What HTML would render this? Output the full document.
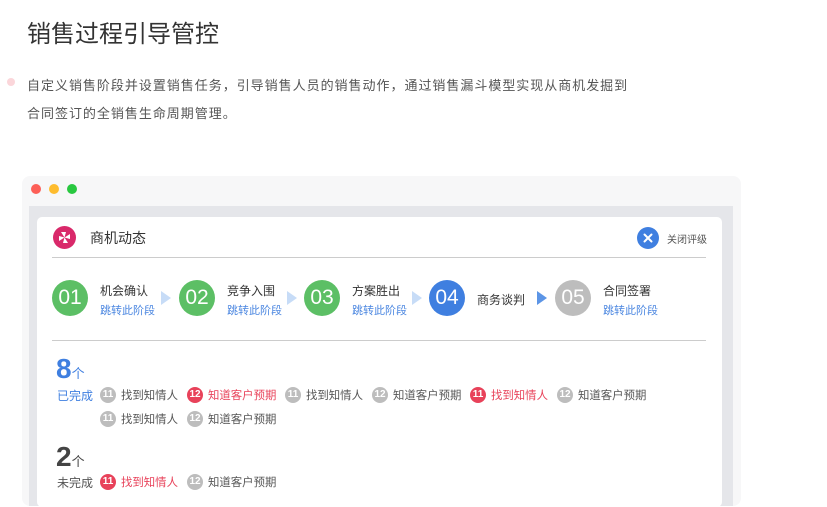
<!DOCTYPE html>
<html><head><meta charset="utf-8"><style>
*{margin:0;padding:0;box-sizing:border-box}
body{width:827px;height:496px;overflow:hidden;background:#fff;font-family:"Liberation Sans","Noto Sans CJK SC",sans-serif;position:relative;color:#333}
.a{position:absolute;white-space:nowrap}
.c{position:absolute;border-radius:50%;color:#fff;text-align:center}
.step{width:36px;height:36px;line-height:36px;font-size:21px;top:280px}
.lab{font-size:12px;color:#333;top:282px}
.lnk{font-size:11px;color:#4a86e0;top:302px}
.arr{position:absolute;top:291px;width:0;height:0;border-top:7px solid transparent;border-bottom:7px solid transparent;border-left:10px solid #c7dcf7}
.tg{width:16px;height:16px;line-height:16px;font-size:10px;font-weight:bold;background:#bdbdbd}
.tt{font-size:11.4px;color:#555}
.red{background:#e8425a}
.rt{color:#e8425a}
</style></head><body>
<div class="a" style="left:27px;top:14px;font-size:24px;color:#333">销售过程引导管控</div>
<div class="c" style="left:7px;top:78px;width:8px;height:8px;background:#fbd6da"></div>
<div class="a" style="left:27px;top:75px;font-size:13px;letter-spacing:0.98px;color:#555">自定义销售阶段并设置销售任务，引导销售人员的销售动作，通过销售漏斗模型实现从商机发掘到</div>
<div class="a" style="left:27px;top:103px;font-size:13px;letter-spacing:0.98px;color:#555">合同签订的全销售生命周期管理。</div>

<div class="a" style="left:22px;top:176px;width:719px;height:330px;background:#f7f7f8;border-radius:8px"></div>
<div class="c" style="left:31px;top:184px;width:10px;height:10px;background:#fd5f57"></div>
<div class="c" style="left:49px;top:184px;width:10px;height:10px;background:#febc2e"></div>
<div class="c" style="left:67px;top:184px;width:10px;height:10px;background:#29c840"></div>
<div class="a" style="left:29px;top:206px;width:704px;height:300px;background:#e5e6ea"></div>
<div class="a" style="left:37px;top:217px;width:685px;height:290px;background:#fff;border-radius:5px"></div>

<div class="c" style="left:53px;top:226px;width:23px;height:23px;background:#d9296a">
<svg width="23" height="23" viewBox="0 0 23 23"><g fill="#fff"><path d="M11.5 11.5 L8 6 L13 6Z"/><path d="M11.5 11.5 L17 8 L17 13Z"/><path d="M11.5 11.5 L15 17 L10 17Z"/><path d="M11.5 11.5 L6 15 L6 10Z"/></g></svg></div>
<div class="a" style="left:90px;top:228px;font-size:14px;color:#333">商机动态</div>
<div class="c" style="left:637px;top:227px;width:22px;height:22px;background:#3f7fe0">
<svg width="22" height="22" viewBox="0 0 22 22"><path d="M7.5 7.5L14.5 14.5M14.5 7.5L7.5 14.5" stroke="#fff" stroke-width="2" stroke-linecap="round"/></svg></div>
<div class="a" style="left:667px;top:231px;font-size:10px;color:#555">关闭评级</div>
<div class="a" style="left:52px;top:257px;width:654px;height:1px;background:#ccc"></div>

<div class="c step" style="left:52px;background:#5cbf65">01</div>
<div class="a lab" style="left:100px">机会确认</div><div class="a lnk" style="left:100px">跳转此阶段</div>
<div class="arr" style="left:161px"></div>
<div class="c step" style="left:179px;background:#5cbf65">02</div>
<div class="a lab" style="left:227px">竞争入围</div><div class="a lnk" style="left:227px">跳转此阶段</div>
<div class="arr" style="left:287px"></div>
<div class="c step" style="left:304px;background:#5cbf65">03</div>
<div class="a lab" style="left:352px">方案胜出</div><div class="a lnk" style="left:352px">跳转此阶段</div>
<div class="arr" style="left:412px"></div>
<div class="c step" style="left:429px;background:#3f7fe0">04</div>
<div class="a lab" style="left:477px;top:291px">商务谈判</div>
<div class="arr" style="left:537px;border-left-color:#5c95e6"></div>
<div class="c step" style="left:555px;background:#bdbdbd">05</div>
<div class="a lab" style="left:603px">合同签署</div><div class="a lnk" style="left:603px">跳转此阶段</div>
<div class="a" style="left:52px;top:340px;width:654px;height:1px;background:#ccc"></div>

<div class="a" style="left:56px;top:353px;font-size:28px;font-weight:bold;color:#3f7fe0">8<span style="font-size:13px;font-weight:normal">个</span></div>
<div class="a" style="left:57px;top:387px;font-size:12px;color:#3f7fe0">已完成</div>
<div class="c tg" style="left:100px;top:387px">11</div><div class="a tt" style="left:121px;top:387px">找到知情人</div>
<div class="c tg red" style="left:187px;top:387px">12</div><div class="a tt rt" style="left:208px;top:387px">知道客户预期</div>
<div class="c tg" style="left:285px;top:387px">11</div><div class="a tt" style="left:306px;top:387px">找到知情人</div>
<div class="c tg" style="left:372px;top:387px">12</div><div class="a tt" style="left:393px;top:387px">知道客户预期</div>
<div class="c tg red" style="left:470px;top:387px">11</div><div class="a tt rt" style="left:491px;top:387px">找到知情人</div>
<div class="c tg" style="left:557px;top:387px">12</div><div class="a tt" style="left:578px;top:387px">知道客户预期</div>
<div class="c tg" style="left:100px;top:411px">11</div><div class="a tt" style="left:121px;top:411px">找到知情人</div>
<div class="c tg" style="left:187px;top:411px">12</div><div class="a tt" style="left:208px;top:411px">知道客户预期</div>

<div class="a" style="left:56px;top:441px;font-size:28px;font-weight:bold;color:#444">2<span style="font-size:13px;font-weight:normal">个</span></div>
<div class="a" style="left:57px;top:474px;font-size:12px;color:#555">未完成</div>
<div class="c tg red" style="left:100px;top:474px">11</div><div class="a tt rt" style="left:121px;top:474px">找到知情人</div>
<div class="c tg" style="left:187px;top:474px">12</div><div class="a tt" style="left:208px;top:474px">知道客户预期</div>
</body></html>
